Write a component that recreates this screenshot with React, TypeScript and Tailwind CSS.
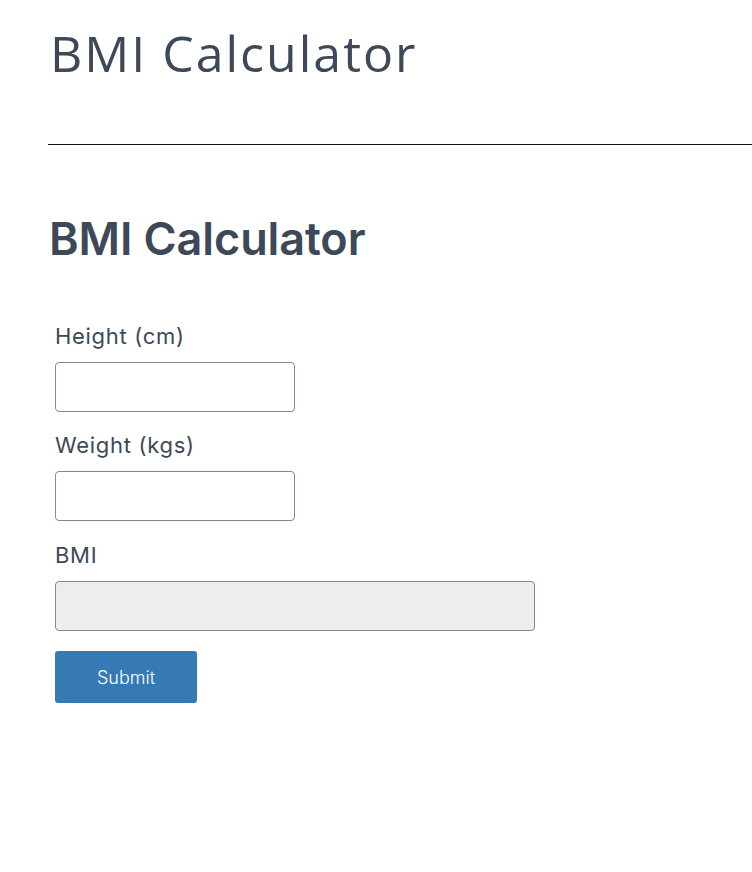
export default function App() {
  return (
    <main className="min-h-[872px] bg-white text-[#3d4858] [font-family:Inter,'Noto_Sans',sans-serif]">
      <header className="pl-[50px] pt-[23px]">
        <h1 className="text-[50px] leading-[60px] tracking-[2px] text-[#3d4858] [font-family:'Open_Sans',sans-serif]">
          BMI Calculator
        </h1>
      </header>
      <div className="ml-[48px] mt-[61px] border-t border-[#111]" />
      <section className="pl-[49px] pt-[68px]">
        <h2 className="text-[45px] font-semibold leading-[52px] tracking-[-0.1px]">
          BMI Calculator
        </h2>
        <form className="mt-[57px] flex flex-col pl-[6px]" onSubmit={(e) => e.preventDefault()}>
          <label className="text-[22px] leading-[28px] tracking-[0.7px]">Height (cm)</label>
          <input className="mt-[12px] h-[50px] w-[240px] rounded-[4px] border border-[#7e8993] bg-white" />
          <label className="mt-[19px] text-[22px] leading-[28px] tracking-[0.7px]">Weight (kgs)</label>
          <input className="mt-[12px] h-[50px] w-[240px] rounded-[4px] border border-[#7e8993] bg-white" />
          <label className="mt-[20px] text-[22px] leading-[28px] tracking-[0.7px]">BMI</label>
          <input disabled className="mt-[12px] h-[50px] w-[480px] rounded-[4px] border border-[#7e8993] bg-[#ededed]" />
          <button className="mt-[20px] h-[52px] w-[142px] rounded-[3px] bg-[#3579b5] text-[18px] font-light text-white">
            Submit
          </button>
        </form>
      </section>
    </main>
  );
}
